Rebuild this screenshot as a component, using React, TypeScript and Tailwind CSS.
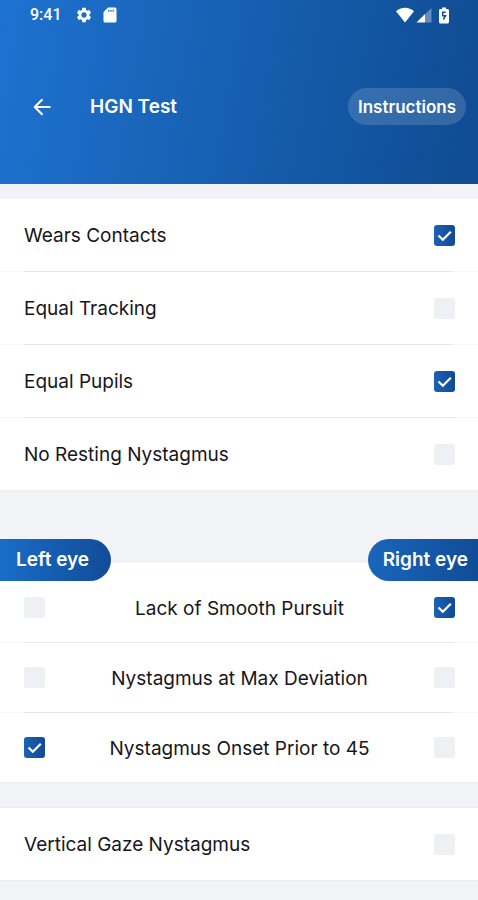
import { useId, useState } from 'react';
import { MdSettings } from 'react-icons/md';

const OBSERVATIONS = [
  { label: 'Wears Contacts', checked: true },
  { label: 'Equal Tracking', checked: false },
  { label: 'Equal Pupils', checked: true },
  { label: 'No Resting Nystagmus', checked: false },
];

const CLUES = [
  { label: 'Lack of Smooth Pursuit', left: false, right: true },
  { label: 'Nystagmus at Max Deviation', left: false, right: false },
  { label: 'Nystagmus Onset Prior to 45', left: true, right: false },
];

export default function App() {
  return (
    <div className="min-h-screen bg-[#f2f3f7] font-['Inter','Liberation_Sans',sans-serif] text-[#16161c]">
      <Header />
      <main className="pt-[15px]">
        <section className="border-b border-[#ebecee] bg-white">
          {OBSERVATIONS.map((o, i) => (
            <div key={o.label}>
              {i > 0 && <Divider />}
              <CheckRow label={o.label} defaultChecked={o.checked} />
            </div>
          ))}
        </section>

        {/* flow-root keeps the tabs' negative margin inside, so they hang over the top edge */}
        <section className="mt-[72px] flow-root border-b border-[#ebecee] bg-white">
          <div className="-mt-6 -mb-2 flex justify-between text-[19px] font-semibold leading-6 text-white">
            <h2
              id="left-eye"
              className="rounded-r-full bg-linear-to-r from-[#1a6dc8] to-[#114c96] py-[9px] pr-[22px] pl-4"
            >
              Left eye
            </h2>
            <h2
              id="right-eye"
              className="rounded-l-full bg-linear-to-r from-[#1a66bd] to-[#114c96] py-[9px] pr-[10px] pl-[15px]"
            >
              Right eye
            </h2>
          </div>
          {CLUES.map((c, i) => (
            <div key={c.label}>
              {i > 0 && <Divider />}
              <EyeRow label={c.label} left={c.left} right={c.right} />
            </div>
          ))}
        </section>

        <section className="mt-6 border-y border-[#ebecee] bg-white">
          <CheckRow label="Vertical Gaze Nystagmus" defaultChecked={false} />
        </section>
      </main>
    </div>
  );
}

function Header() {
  return (
    <header className="bg-linear-100 from-[#1e72d0] via-[#165fb0] via-50% to-[#0f4b91] pb-[59px] text-white">
      <div className="flex h-[30px] items-center justify-between pr-[29px] pl-[30px]">
        <div className="flex items-center">
          <span className="font-['Roboto',sans-serif] text-base font-medium leading-5">9:41</span>
          <MdSettings className="ml-[13px] size-[18px]" aria-hidden />
          <SdCardIcon />
        </div>
        <div className="flex items-center">
          <WifiIcon />
          <SignalIcon />
          <BatteryIcon />
        </div>
      </div>
      <div className="mt-[58px] flex h-[37px] items-center pr-3 pl-8">
        <button type="button" aria-label="Back" className="flex size-5 items-center justify-center">
          <ArrowIcon />
        </button>
        <h1 className="ml-[38px] text-[19px] font-semibold leading-6">HGN Test</h1>
        <button
          type="button"
          className="ml-auto h-[37px] rounded-full bg-white/15 px-[10px] text-[17px] font-semibold leading-6"
        >
          Instructions
        </button>
      </div>
    </header>
  );
}

/* Hairline that is darker between the row paddings than at the screen edges */
function Divider() {
  return (
    <div className="bg-[#f7f7f8] px-6">
      <div className="h-px bg-[#e8e8ea]" />
    </div>
  );
}

function CheckRow({ label, defaultChecked }: { label: string; defaultChecked: boolean }) {
  const id = useId();
  return (
    <div className="flex h-[72px] items-center justify-between pr-[23px] pl-6">
      <label htmlFor={id} className="pt-0.5 text-[19px] leading-6">
        {label}
      </label>
      <Checkbox id={id} defaultChecked={defaultChecked} />
    </div>
  );
}

function EyeRow({ label, left, right }: { label: string; left: boolean; right: boolean }) {
  const id = useId();
  return (
    <div className="flex h-[69px] items-center justify-between pr-[23px] pl-6">
      <Checkbox labelledBy={`left-eye ${id}`} defaultChecked={left} />
      <span id={id} className="pt-0.5 text-[19px] leading-6">
        {label}
      </span>
      <Checkbox labelledBy={`right-eye ${id}`} defaultChecked={right} />
    </div>
  );
}

type CheckboxProps = {
  id?: string;
  labelledBy?: string;
  defaultChecked: boolean;
};

function Checkbox({ id, labelledBy, defaultChecked }: CheckboxProps) {
  const [checked, setChecked] = useState(defaultChecked);
  return (
    <span className="grid size-[21px] shrink-0 place-items-center">
      <input
        id={id}
        type="checkbox"
        aria-labelledby={labelledBy}
        checked={checked}
        onChange={(e) => setChecked(e.target.checked)}
        className="col-start-1 row-start-1 size-[21px] appearance-none rounded-[3px] bg-[#eff0f3] checked:bg-linear-to-r checked:from-[#1a62b8] checked:to-[#114a93]"
      />
      {checked && (
        <svg
          viewBox="0 0 21 21"
          fill="none"
          className="pointer-events-none col-start-1 row-start-1 size-[21px]"
          aria-hidden
        >
          <path d="M4.500 10.500 8.800 14.800 16.800 6.800" stroke="white" strokeWidth="2.200" />
        </svg>
      )}
    </span>
  );
}

function ArrowIcon() {
  return (
    <svg width="20" height="20" viewBox="0 0 20 20" fill="none" aria-hidden>
      <path
        d="M18.500 10H3M10.500 2.200 2.700 10l7.800 7.800"
        stroke="currentColor"
        strokeWidth="2"
        strokeLinejoin="round"
      />
    </svg>
  );
}

function SdCardIcon() {
  return (
    <svg width="14" height="16" viewBox="0 0 14 16" className="ml-[10px]" aria-hidden>
      <path
        fill="currentColor"
        fillRule="evenodd"
        d="M5 .5h7A1.500 1.500 0 0 1 13.500 2v12a1.500 1.500 0 0 1-1.500 1.500H2A1.500 1.500 0 0 1 .5 14V5L5 .5ZM5.200 2.700v2.100h1.200V2.700H5.200Zm2.200 0v2.100h1.200V2.700H7.400Zm2.200 0v2.100h1.200V2.700H9.600Z"
      />
    </svg>
  );
}

function WifiIcon() {
  return (
    <svg width="18" height="16" viewBox="0 0 18 16" aria-hidden>
      <path fill="currentColor" d="M9 15.500 0 4.300C2.500 2 5.600.8 9 .8s6.500 1.200 9 3.500L9 15.500Z" />
    </svg>
  );
}

function SignalIcon() {
  return (
    <svg width="16" height="16" viewBox="0 0 16 16" className="ml-[2px]" aria-hidden>
      <path fill="currentColor" fillOpacity="0.35" d="M15.500 1v14.500H9V7.500L15.500 1Z" />
      <path fill="currentColor" d="M9 7v8.500H.5L9 7Z" />
    </svg>
  );
}

function BatteryIcon() {
  return (
    <svg width="10" height="17" viewBox="0 0 10 17" className="ml-[7px]" aria-hidden>
      <path
        fill="currentColor"
        d="M3 .5h4V2h1.500c.8 0 1.500.6 1.500 1.400v11.600c0 .8-.7 1.500-1.500 1.500h-7C.7 16.500 0 15.800 0 15V3.400C0 2.600.7 2 1.500 2H3V.5Z"
      />
      <path
        d="M6.600 5.200H3.700v3.500h2.800L4.300 12.500"
        fill="none"
        stroke="#124d94"
        strokeWidth="1.500"
      />
    </svg>
  );
}
